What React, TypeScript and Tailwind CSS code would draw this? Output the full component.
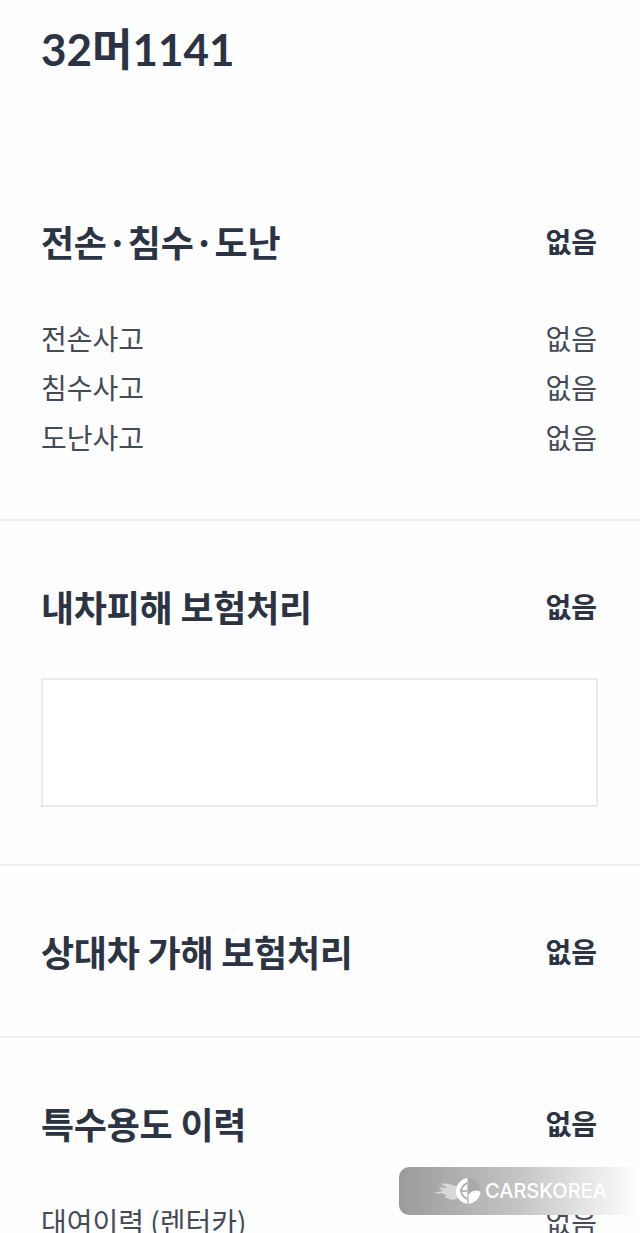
import React from 'react';

const Row = ({ label }: { label: string }) => (
  <div className="flex h-[49.5px] items-center justify-between text-[28px] font-normal text-[#434b59]">
    <span>{label}</span>
    <span>없음</span>
  </div>
);

const Heading = ({ title }: { title: string }) => (
  <div className="flex h-[50px] items-center justify-between">
    <h2 className="text-[36px] font-bold tracking-[-0.25px] text-[#2b3444]">{title}</h2>
    <span className="text-[28px] font-bold text-[#2b3444]">없음</span>
  </div>
);

const Logo = () => (
  <svg width="48" height="30" viewBox="0 0 48 30" className="shrink-0">
    <path
      d="M0 16c3 1 6-1 9-1-2-1-3-3-5-3 4-1 6 0 9 0-2-2-4-3-6-4 5-1 10 0 14 2l3 1v11c-3 2-6 2-9 1-2-1-3-2-5-2 1-1 2-1 3-2-3 0-4-2-6-2-2 1-5 1-7-1z"
      fill="#e4e5e4"
      opacity="0.75"
    />
    <path d="M33.3 2.1a13 13 0 0 0 0 25.8z" fill="#ffffff" />
    <path d="M34.7 2.1a13 13 0 0 1 11.8 12.9c-4-2.5-10-1-11.8 3z" fill="#a8aaa9" />
    <path d="M34.7 18.5c2-3.5 8-5 11.8-2.5a13 13 0 0 1-11.8 11.9z" fill="#ffffff" />
    <path d="M33 7c-4 2.5-6 5-6 8s2 5.5 6 8" fill="none" stroke="#a5a7a6" strokeWidth="1.6" />
    <path d="M27.5 15h5.5" stroke="#a5a7a6" strokeWidth="1.6" />
  </svg>
);

export default function App() {
  return (
    <div className="relative h-[1233px] w-[640px] overflow-hidden bg-[#fefefe] font-['Noto_Sans_CJK_KR','Noto_Sans',sans-serif]">
      <section className="border-b-2 border-[#eef0f2] pb-[57px] pl-[41px] pr-[43px] pt-[19px]">
        <h1 className="h-[60px] font-['Lato','Noto_Sans_CJK_KR',sans-serif] text-[44px] font-bold leading-[60px] text-[#2b3444]">
          32머1141
        </h1>
        <div className="h-[137px]" />
        <Heading title="전손·침수·도난" />
        <div className="mt-[47px]">
          <Row label="전손사고" />
          <Row label="침수사고" />
          <Row label="도난사고" />
        </div>
      </section>
      <section className="border-b-2 border-[#eef0f2] pb-[57px] pl-[41px] pr-[43px] pt-[60px]">
        <Heading title="내차피해 보험처리" />
        <div className="mr-[-1px] mt-[47px] h-[129px] border-2 border-[#e6ecef] bg-white" />
      </section>
      <section className="border-b-2 border-[#eef0f2] pb-[60px] pl-[41px] pr-[43px] pt-[60px]">
        <Heading title="상대차 가해 보험처리" />
      </section>
      <section className="pl-[41px] pr-[43px] pt-[60px]">
        <Heading title="특수용도 이력" />
        <div className="mt-[49px]">
          <Row label="대여이력 (렌터카)" />
        </div>
      </section>
      <div className="absolute left-[399px] top-[1167px] flex h-[48px] w-[241px] items-center rounded-l-[10px] bg-gradient-to-r from-[#9a9c9b] via-[#c4c6c5] to-[#ffffff] pl-[35px]">
        <Logo />
        <span className="ml-[3px] font-['Inter',sans-serif] text-[20px] font-medium text-white">CARSKOREA</span>
      </div>
    </div>
  );
}
